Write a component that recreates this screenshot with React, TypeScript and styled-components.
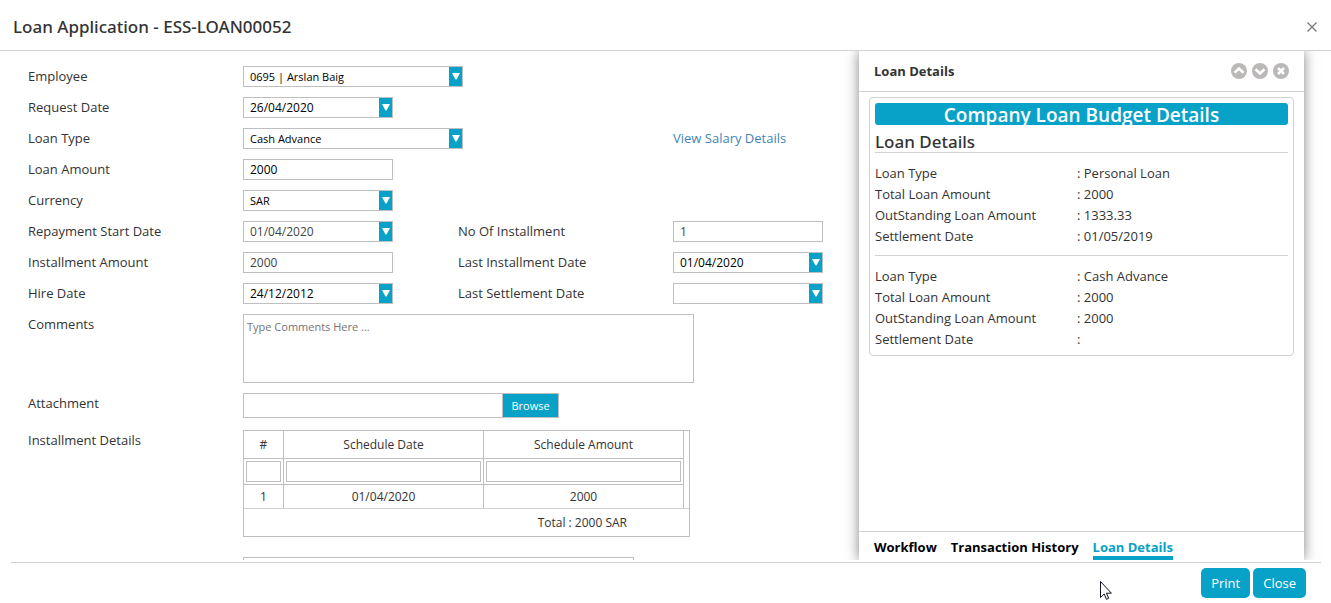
import React from "react";
import styled, { createGlobalStyle } from "styled-components";

const ACCENT = "#08a2c9";
const LINE = "#bfbfbf";
const SOFT = "#d2d2d2";

const GlobalStyle = createGlobalStyle`
  * { box-sizing: border-box; }
  body {
    margin: 0;
    background: #fff;
    color: #333;
    font-family: "Segoe UI", "Open Sans", "Noto Sans", sans-serif;
    font-size: 13px;
    line-height: 21px;
  }
  button, input, select, textarea { font-family: inherit; }
`;

const Dialog = styled.div`
  display: flex;
  flex-direction: column;
  height: 100vh;
  overflow: hidden;
`;

const Header = styled.header`
  display: flex;
  flex: none;
  align-items: center;
  justify-content: space-between;
  height: 51px;
  padding: 4px 13px 0;
  border-bottom: 1px solid ${SOFT};
`;

const Title = styled.h1`
  margin: 0;
  font-family: "Segoe UI", "Noto Sans", sans-serif;
  font-size: 17px;
  font-weight: 500;
  line-height: 24px;
`;

const IconButton = styled.button`
  display: flex;
  padding: 0;
  border: 0;
  background: none;
  cursor: pointer;
`;

const Main = styled.main`
  display: flex;
  flex: 1;
  min-height: 0;
  padding-right: 27px;
  overflow: hidden;
`;

const Form = styled.form`
  flex: 1;
  min-width: 0;
  padding: 15px 0 0 28px;
  overflow-y: auto;
  scrollbar-width: none;
`;

const Row = styled.div<{ $gap?: number }>`
  display: grid;
  grid-template-columns: repeat(3, 215px) 1fr;
  align-items: start;
  margin-bottom: ${(p) => p.$gap ?? 10}px;
`;

const Label = styled.label`
  line-height: 21px;
`;

const Wide = styled.div`
  grid-column: 2 / -1;
`;

const Field = styled.div<{ $width?: number }>`
  display: flex;
  width: ${(p) => p.$width ?? 150}px;
  height: 21px;
  border: 1px solid ${LINE};
`;

const TextInput = styled.input<{ $muted?: boolean }>`
  flex: 1;
  min-width: 0;
  height: 100%;
  padding: 0 6px;
  border: 0;
  outline: 0;
  background: transparent;
  color: ${(p) => (p.$muted ? "#444" : "#000")};
  font-size: 12px;
`;

const Select = styled.select`
  flex: 1;
  min-width: 0;
  height: 100%;
  padding: 0 6px;
  border: 0;
  outline: 0;
  appearance: none;
  background: transparent;
  color: #000;
  font-size: 11px;
`;

const DropButton = styled.button`
  display: flex;
  align-items: center;
  justify-content: center;
  width: 13px;
  padding: 0;
  border: 0;
  background: ${ACCENT};
`;

const Link = styled.a`
  color: #3f84b8;
  text-decoration: none;
`;

const Comments = styled.textarea`
  display: block;
  width: 451px;
  max-width: 100%;
  height: 69px;
  padding: 2px 3px;
  border: 1px solid ${LINE};
  outline: 0;
  resize: none;
  font-size: 11px;
  line-height: 20px;
  &::placeholder { color: #757575; }
`;

const Attachment = styled.div`
  display: flex;
  width: 316px;
  height: 25px;
  border: 1px solid ${LINE};
`;

const Browse = styled.button`
  width: 56px;
  padding: 0;
  border: 0;
  border-left: 1px solid ${LINE};
  background: ${ACCENT};
  color: #fff;
  font-size: 11px;
`;

const Schedule = styled.div`
  width: 447px;
  margin-bottom: 20px;
  border: 1px solid ${LINE};
`;

const Table = styled.table`
  width: 440px;
  border-collapse: separate;
  border-spacing: 0;
  table-layout: fixed;
  font-size: 12px;
  line-height: 18px;
`;

const IndexColumn = styled.col`
  width: 40px;
`;

const Cell = styled.td<{ $height: number; $line?: boolean }>`
  height: ${(p) => p.$height}px;
  padding: 0 2px;
  border-right: 1px solid ${LINE};
  border-bottom: ${(p) => (p.$line === false ? "0" : `1px solid ${LINE}`)};
  font-weight: 400;
  text-align: center;
`;

const Filter = styled.input`
  display: block;
  width: 100%;
  height: 21px;
  padding: 0 4px;
  border: 1px solid ${LINE};
  outline: 0;
`;

const Total = styled.div`
  height: 28px;
  padding: 0 62px 0 0;
  border-top: 1px solid ${SOFT};
  font-size: 12px;
  line-height: 27px;
  text-align: right;
`;

const NextSection = styled.div`
  width: 391px;
  height: 60px;
  border: 1px solid ${LINE};
`;

const Panel = styled.aside`
  display: flex;
  flex: 0 0 445px;
  flex-direction: column;
  min-height: 0;
  background: #fff;
  box-shadow: 0 0 12px rgba(0, 0, 0, 0.5);
`;

const PanelHeader = styled.div`
  display: flex;
  align-items: center;
  justify-content: space-between;
  height: 41px;
  padding: 0 15px;
  border-bottom: 1px solid ${SOFT};
`;

const PanelTitle = styled.h2`
  margin: 0;
  font-size: 13px;
  font-weight: 700;
`;

const Tools = styled.div`
  display: flex;
  gap: 5px;
`;

const PanelBody = styled.div`
  flex: 1;
  min-height: 0;
  padding: 5px 10px;
`;

const Card = styled.div`
  padding: 5px;
  border: 1px solid ${SOFT};
  border-radius: 4px;
`;

const Banner = styled.div`
  height: 22px;
  border-radius: 3px;
  background: ${ACCENT};
  color: #fff;
  font-size: 19px;
  font-weight: 600;
  line-height: 24px;
  text-align: center;
`;

const Subheading = styled.h3`
  margin: 6px 0 10px;
  border-bottom: 1px solid ${SOFT};
  font-family: "Segoe UI", "Noto Sans", sans-serif;
  font-size: 17px;
  font-weight: 500;
  line-height: 21px;
`;

const Facts = styled.table`
  width: 100%;
  border-collapse: collapse;
`;

const Rule = styled.hr`
  margin: 8px 0 10px;
  border: 0;
  border-top: 1px solid ${SOFT};
`;

const FactName = styled.th`
  width: 202px;
  padding: 0;
  font-weight: 400;
  line-height: 21px;
  text-align: left;
`;

const FactValue = styled.td`
  padding: 0;
  line-height: 21px;
`;

const Tabs = styled.nav`
  display: flex;
  gap: 14px;
  height: 29px;
  padding: 4px 15px 0;
  border-top: 1px solid ${SOFT};
`;

const Tab = styled.a<{ $active?: boolean }>`
  height: 24px;
  border-bottom: 4px solid ${(p) => (p.$active ? ACCENT : "transparent")};
  color: ${(p) => (p.$active ? ACCENT : "#000")};
  font-weight: 700;
  line-height: 22px;
  text-decoration: none;
`;

const Footer = styled.footer`
  display: flex;
  flex: none;
  gap: 3px;
  justify-content: flex-end;
  height: 41px;
  margin: 2px 10px 0 11px;
  padding: 5px 15px 0 0;
  border-top: 1px solid ${SOFT};
`;

const Action = styled.button`
  height: 30px;
  padding: 0 10px;
  border: 0;
  border-radius: 5px;
  background: ${ACCENT};
  color: #fff;
  font-size: 13px;
`;

const Pointer = styled.svg`
  position: absolute;
  top: 581px;
  left: 1100px;
`;

const Arrow = () => (
  <svg width="8" height="7" viewBox="0 0 8 7" aria-hidden="true">
    <path d="M0 0h8L4.500 6.500h-1z" fill="#fff" />
  </svg>
);

const RoundIcon = ({ d }: { d: string }) => (
  <svg width="16" height="16" viewBox="0 0 16 16" aria-hidden="true">
    <circle cx="8" cy="8" r="8" fill="#bbb8b8" />
    <path d={d} fill="none" stroke="#fff" strokeWidth="2.6" />
  </svg>
);

type DateProps = { id: string; value: string; muted?: boolean };

const DateField = ({ id, value, muted }: DateProps) => (
  <Field>
    <TextInput id={id} defaultValue={value} $muted={muted} />
    <DropButton type="button" aria-label="Open calendar">
      <Arrow />
    </DropButton>
  </Field>
);

type ChoiceProps = { id: string; value: string; width?: number };

const Choice = ({ id, value, width }: ChoiceProps) => (
  <Field $width={width}>
    <Select id={id} defaultValue={value}>
      <option>{value}</option>
    </Select>
    <DropButton type="button" aria-label="Open list">
      <Arrow />
    </DropButton>
  </Field>
);

const loans = [
  { type: "Personal Loan", total: "2000", outstanding: "1333.33", settled: "01/05/2019" },
  { type: "Cash Advance", total: "2000", outstanding: "2000", settled: "" },
];

export default function App() {
  return (
    <Dialog>
      <GlobalStyle />
      <Header>
        <Title>Loan Application - ESS-LOAN00052</Title>
        <IconButton aria-label="Close dialog">
          <svg width="12" height="12" viewBox="0 0 12 12">
            <path d="M1.5 1.5l9 9M10.500 1.500l-9 9" stroke="#777" strokeWidth="1.3" />
          </svg>
        </IconButton>
      </Header>

      <Main>
        <Form>
          <Row>
            <Label htmlFor="employee">Employee</Label>
            <Choice id="employee" value="0695 | Arslan Baig" width={220} />
          </Row>
          <Row>
            <Label htmlFor="request">Request Date</Label>
            <DateField id="request" value="26/04/2020" />
          </Row>
          <Row>
            <Label htmlFor="type">Loan Type</Label>
            <Choice id="type" value="Cash Advance" width={220} />
            <span />
            <Link href="#salary">View Salary Details</Link>
          </Row>
          <Row>
            <Label htmlFor="amount">Loan Amount</Label>
            <Field>
              <TextInput id="amount" defaultValue="2000" />
            </Field>
          </Row>
          <Row>
            <Label htmlFor="currency">Currency</Label>
            <Choice id="currency" value="SAR" width={150} />
          </Row>
          <Row>
            <Label htmlFor="start">Repayment Start Date</Label>
            <DateField id="start" value="01/04/2020" muted />
            <Label htmlFor="count">No Of Installment</Label>
            <Field>
              <TextInput id="count" defaultValue="1" $muted />
            </Field>
          </Row>
          <Row>
            <Label htmlFor="installment">Installment Amount</Label>
            <Field>
              <TextInput id="installment" defaultValue="2000" $muted />
            </Field>
            <Label htmlFor="last">Last Installment Date</Label>
            <DateField id="last" value="01/04/2020" />
          </Row>
          <Row>
            <Label htmlFor="hire">Hire Date</Label>
            <DateField id="hire" value="24/12/2012" />
            <Label htmlFor="settlement">Last Settlement Date</Label>
            <DateField id="settlement" value="" />
          </Row>
          <Row>
            <Label htmlFor="comments">Comments</Label>
            <Wide>
              <Comments id="comments" placeholder="Type Comments Here ..." />
            </Wide>
          </Row>
          <Row $gap={12}>
            <Label htmlFor="attachment">Attachment</Label>
            <Wide>
              <Attachment>
                <TextInput id="attachment" />
                <Browse type="button">Browse</Browse>
              </Attachment>
            </Wide>
          </Row>
          <Row $gap={0}>
            <Label as="span">Installment Details</Label>
            <Wide>
              <Schedule>
                <Table>
                  <colgroup>
                    <IndexColumn />
                    <col />
                    <col />
                  </colgroup>
                  <thead>
                    <tr>
                      <Cell as="th" $height={28}>#</Cell>
                      <Cell as="th" $height={28}>Schedule Date</Cell>
                      <Cell as="th" $height={28}>Schedule Amount</Cell>
                    </tr>
                  </thead>
                  <tbody>
                    <tr>
                      {["number", "date", "amount"].map((name) => (
                        <Cell key={name} $height={26}>
                          <Filter aria-label={`Filter by ${name}`} />
                        </Cell>
                      ))}
                    </tr>
                    <tr>
                      <Cell $height={23} $line={false}>1</Cell>
                      <Cell $height={23} $line={false}>01/04/2020</Cell>
                      <Cell $height={23} $line={false}>2000</Cell>
                    </tr>
                  </tbody>
                </Table>
                <Total>Total : 2000 SAR</Total>
              </Schedule>
              <NextSection />
            </Wide>
          </Row>
        </Form>

        <Panel>
          <PanelHeader>
            <PanelTitle>Loan Details</PanelTitle>
            <Tools>
              <IconButton aria-label="Previous">
                <RoundIcon d="M3.500 9.800L8 5.500l4.500 4.300" />
              </IconButton>
              <IconButton aria-label="Next">
                <RoundIcon d="M3.500 6.200L8 10.500l4.500-4.300" />
              </IconButton>
              <IconButton aria-label="Close panel">
                <RoundIcon d="M5 5l6 6M11 5l-6 6" />
              </IconButton>
            </Tools>
          </PanelHeader>
          <PanelBody>
            <Card>
              <Banner>Company Loan Budget Details</Banner>
              <Subheading>Loan Details</Subheading>
              {loans.map((loan, i) => (
                <React.Fragment key={loan.type}>
                  {i > 0 && <Rule />}
                  <Facts>
                    <tbody>
                      <tr>
                        <FactName scope="row">Loan Type</FactName>
                        <FactValue>: {loan.type}</FactValue>
                      </tr>
                      <tr>
                        <FactName scope="row">Total Loan Amount</FactName>
                        <FactValue>: {loan.total}</FactValue>
                      </tr>
                      <tr>
                        <FactName scope="row">OutStanding Loan Amount</FactName>
                        <FactValue>: {loan.outstanding}</FactValue>
                      </tr>
                      <tr>
                        <FactName scope="row">Settlement Date</FactName>
                        <FactValue>: {loan.settled}</FactValue>
                      </tr>
                    </tbody>
                  </Facts>
                </React.Fragment>
              ))}
            </Card>
          </PanelBody>
          <Tabs>
            <Tab href="#workflow">Workflow</Tab>
            <Tab href="#history">Transaction History</Tab>
            <Tab href="#details" $active>Loan Details</Tab>
          </Tabs>
        </Panel>
      </Main>

      <Footer>
        <Action>Print</Action>
        <Action>Close</Action>
      </Footer>

      <Pointer width="12" height="19" viewBox="0 0 12 19" aria-hidden="true">
        <path d="M.5.5v16l3.700-3.500 2.300 5.300 2.200-1-2.300-5.100h5z" fill="#fff" stroke="#112" />
      </Pointer>
    </Dialog>
  );
}
